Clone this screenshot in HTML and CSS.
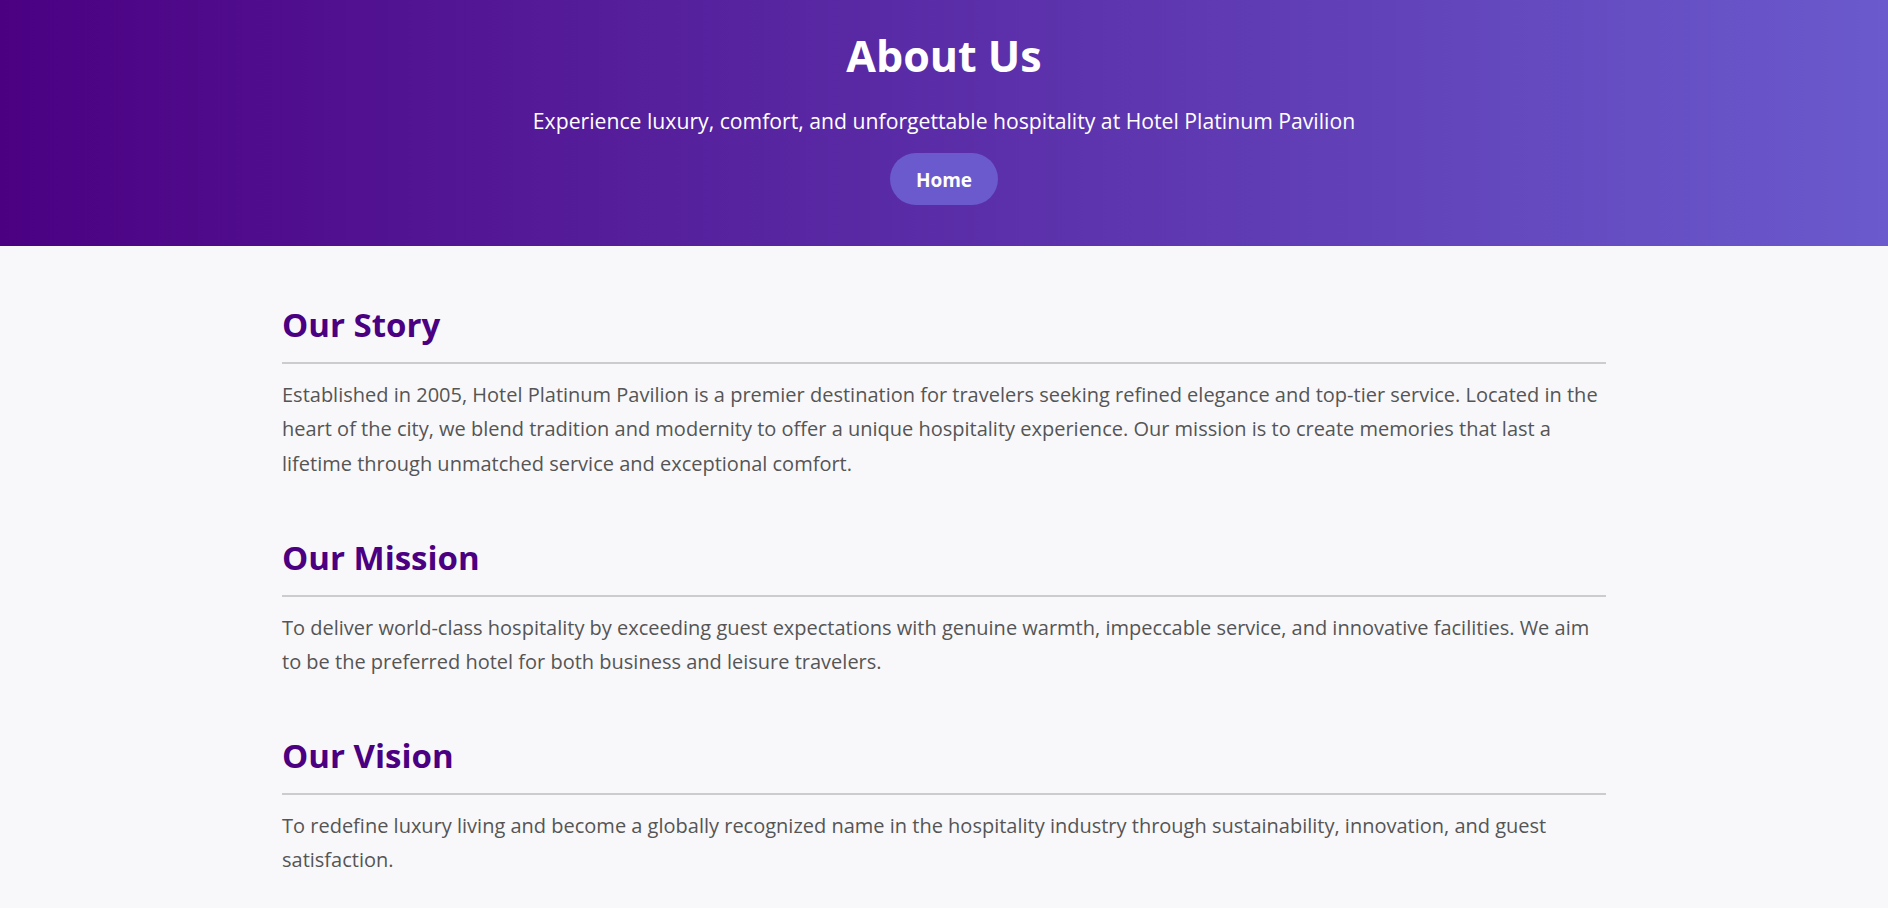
FILE: index.html
```html
<!DOCTYPE html>
<html lang="en">
<head>
<meta charset="utf-8">
<title>About Us - Hotel Platinum Pavilion</title>
<link rel="stylesheet" href="styles.css">
</head>
<body>
<header class="hero">
  <h1 class="hero-title">About Us</h1>
  <p class="hero-subtitle">Experience luxury, comfort, and unforgettable hospitality at Hotel Platinum Pavilion</p>
  <a class="hero-btn" href="#">Home</a>
</header>
<main class="content">
  <section class="block">
    <h2 class="block-title">Our Story</h2>
    <p class="block-text">Established in 2005, Hotel Platinum Pavilion is a premier destination for travelers seeking refined elegance and top-tier service. Located in the heart of the city, we blend tradition and modernity to offer a unique hospitality experience. Our mission is to create memories that last a lifetime through unmatched service and exceptional comfort.</p>
  </section>
  <section class="block">
    <h2 class="block-title">Our Mission</h2>
    <p class="block-text">To deliver world-class hospitality by exceeding guest expectations with genuine warmth, impeccable service, and innovative facilities. We aim to be the preferred hotel for both business and leisure travelers.</p>
  </section>
  <section class="block">
    <h2 class="block-title">Our Vision</h2>
    <p class="block-text">To redefine luxury living and become a globally recognized name in the hospitality industry through sustainability, innovation, and guest satisfaction.</p>
  </section>
</main>
</body>
</html>
```
FILE: styles.css
```css
* { box-sizing: border-box; }

body {
  margin: 0;
  background: #f8f8fb;
  font-family: "Open Sans", "Noto Sans", sans-serif;
  color: #555;
}

.hero {
  display: flex;
  flex-direction: column;
  align-items: center;
  background: linear-gradient(to right, #4b0082, #6a5acd);
  color: #fff;
  text-align: center;
  padding: 30px 20px 41px;
}

.hero-title {
  margin: 0;
  font-size: 43px;
  line-height: 52px;
  font-weight: 700;
}

.hero-subtitle {
  margin: 25px 0 0;
  font-size: 21.2px;
  line-height: 28px;
}

.hero-btn {
  display: block;
  margin-top: 18px;
  height: 52px;
  padding: 3px 25.5px 0;
  line-height: 49px;
  border-radius: 26px;
  background: #6a5acd;
  color: #fff;
  font-weight: 700;
  font-size: 19px;
  text-decoration: none;
}

.content {
  max-width: 1324px;
  margin: 0 auto;
  padding-top: 59px;
}

.block { margin-bottom: 56.5px; }

.block-title {
  margin: 0;
  font-size: 33px;
  line-height: 40px;
  font-weight: 700;
  color: #4b0082;
  padding-bottom: 17px;
  border-bottom: 2px solid #ccc;
}

.block-text {
  margin: 14px 0 0;
  font-size: 20px;
  line-height: 34.4px;
}
```
